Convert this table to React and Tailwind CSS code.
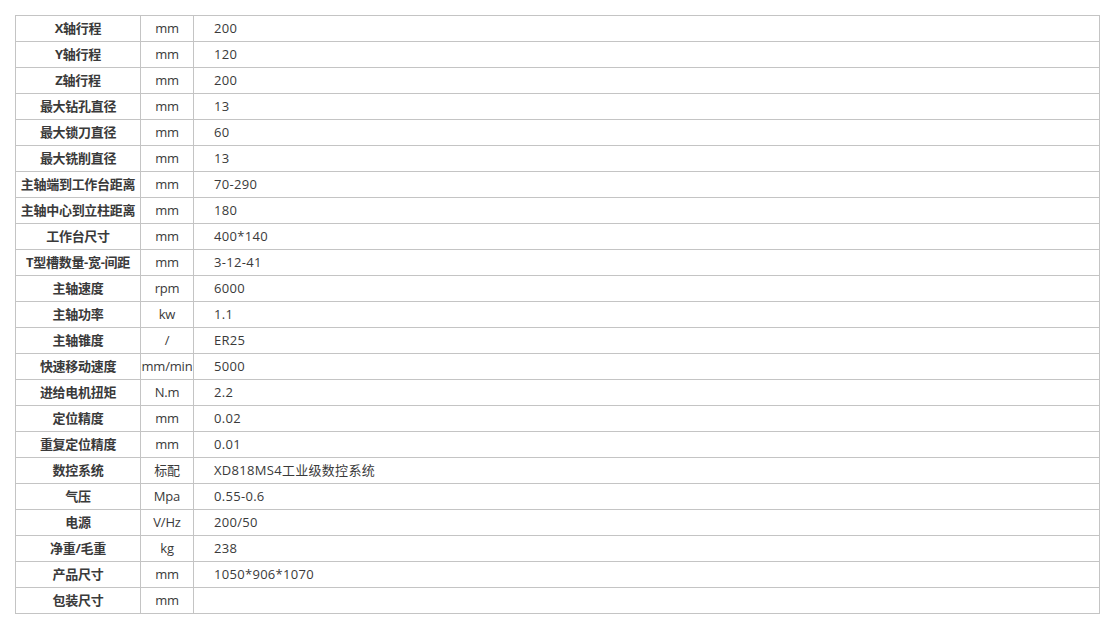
import React from "react";

const rows = [
  ["X轴行程", "mm", "200"],
  ["Y轴行程", "mm", "120"],
  ["Z轴行程", "mm", "200"],
  ["最大钻孔直径", "mm", "13"],
  ["最大锁刀直径", "mm", "60"],
  ["最大铣削直径", "mm", "13"],
  ["主轴端到工作台距离", "mm", "70-290"],
  ["主轴中心到立柱距离", "mm", "180"],
  ["工作台尺寸", "mm", "400*140"],
  ["T型槽数量-宽-间距", "mm", "3-12-41"],
  ["主轴速度", "rpm", "6000"],
  ["主轴功率", "kw", "1.1"],
  ["主轴锥度", "/", "ER25"],
  ["快速移动速度", "mm/min", "5000"],
  ["进给电机扭矩", "N.m", "2.2"],
  ["定位精度", "mm", "0.02"],
  ["重复定位精度", "mm", "0.01"],
  ["数控系统", "标配", "XD818MS4工业级数控系统"],
  ["气压", "Mpa", "0.55-0.6"],
  ["电源", "V/Hz", "200/50"],
  ["净重/毛重", "kg", "238"],
  ["产品尺寸", "mm", "1050*906*1070"],
  ["包装尺寸", "mm", ""],
];

export default function App() {
  return (
    <div
      className="bg-white pt-[15px] pl-[15px] h-[629px] text-[#3a3a3a] text-[13px]"
      style={{ fontFamily: '"Open Sans", "Noto Sans CJK SC", sans-serif' }}
    >
      <table className="border-collapse table-fixed w-[1085px]">
        <colgroup>
          <col className="w-[125px]" />
          <col className="w-[53px]" />
          <col />
        </colgroup>
        <tbody>
          {rows.map(([label, unit, value], i) => (
            <tr key={i} className="h-[26px]">
              <td className="border border-[#c4c4c4] p-0 text-center font-bold leading-none whitespace-nowrap tracking-[-0.3px]">
                {label}
              </td>
              <td className="border border-[#c4c4c4] p-0 text-center leading-none whitespace-nowrap tracking-[-0.2px]">
                {unit}
              </td>
              <td className="border border-[#c4c4c4] py-0 pl-[20px] leading-none whitespace-nowrap tracking-[0.3px]">
                {value}
              </td>
            </tr>
          ))}
        </tbody>
      </table>
    </div>
  );
}
